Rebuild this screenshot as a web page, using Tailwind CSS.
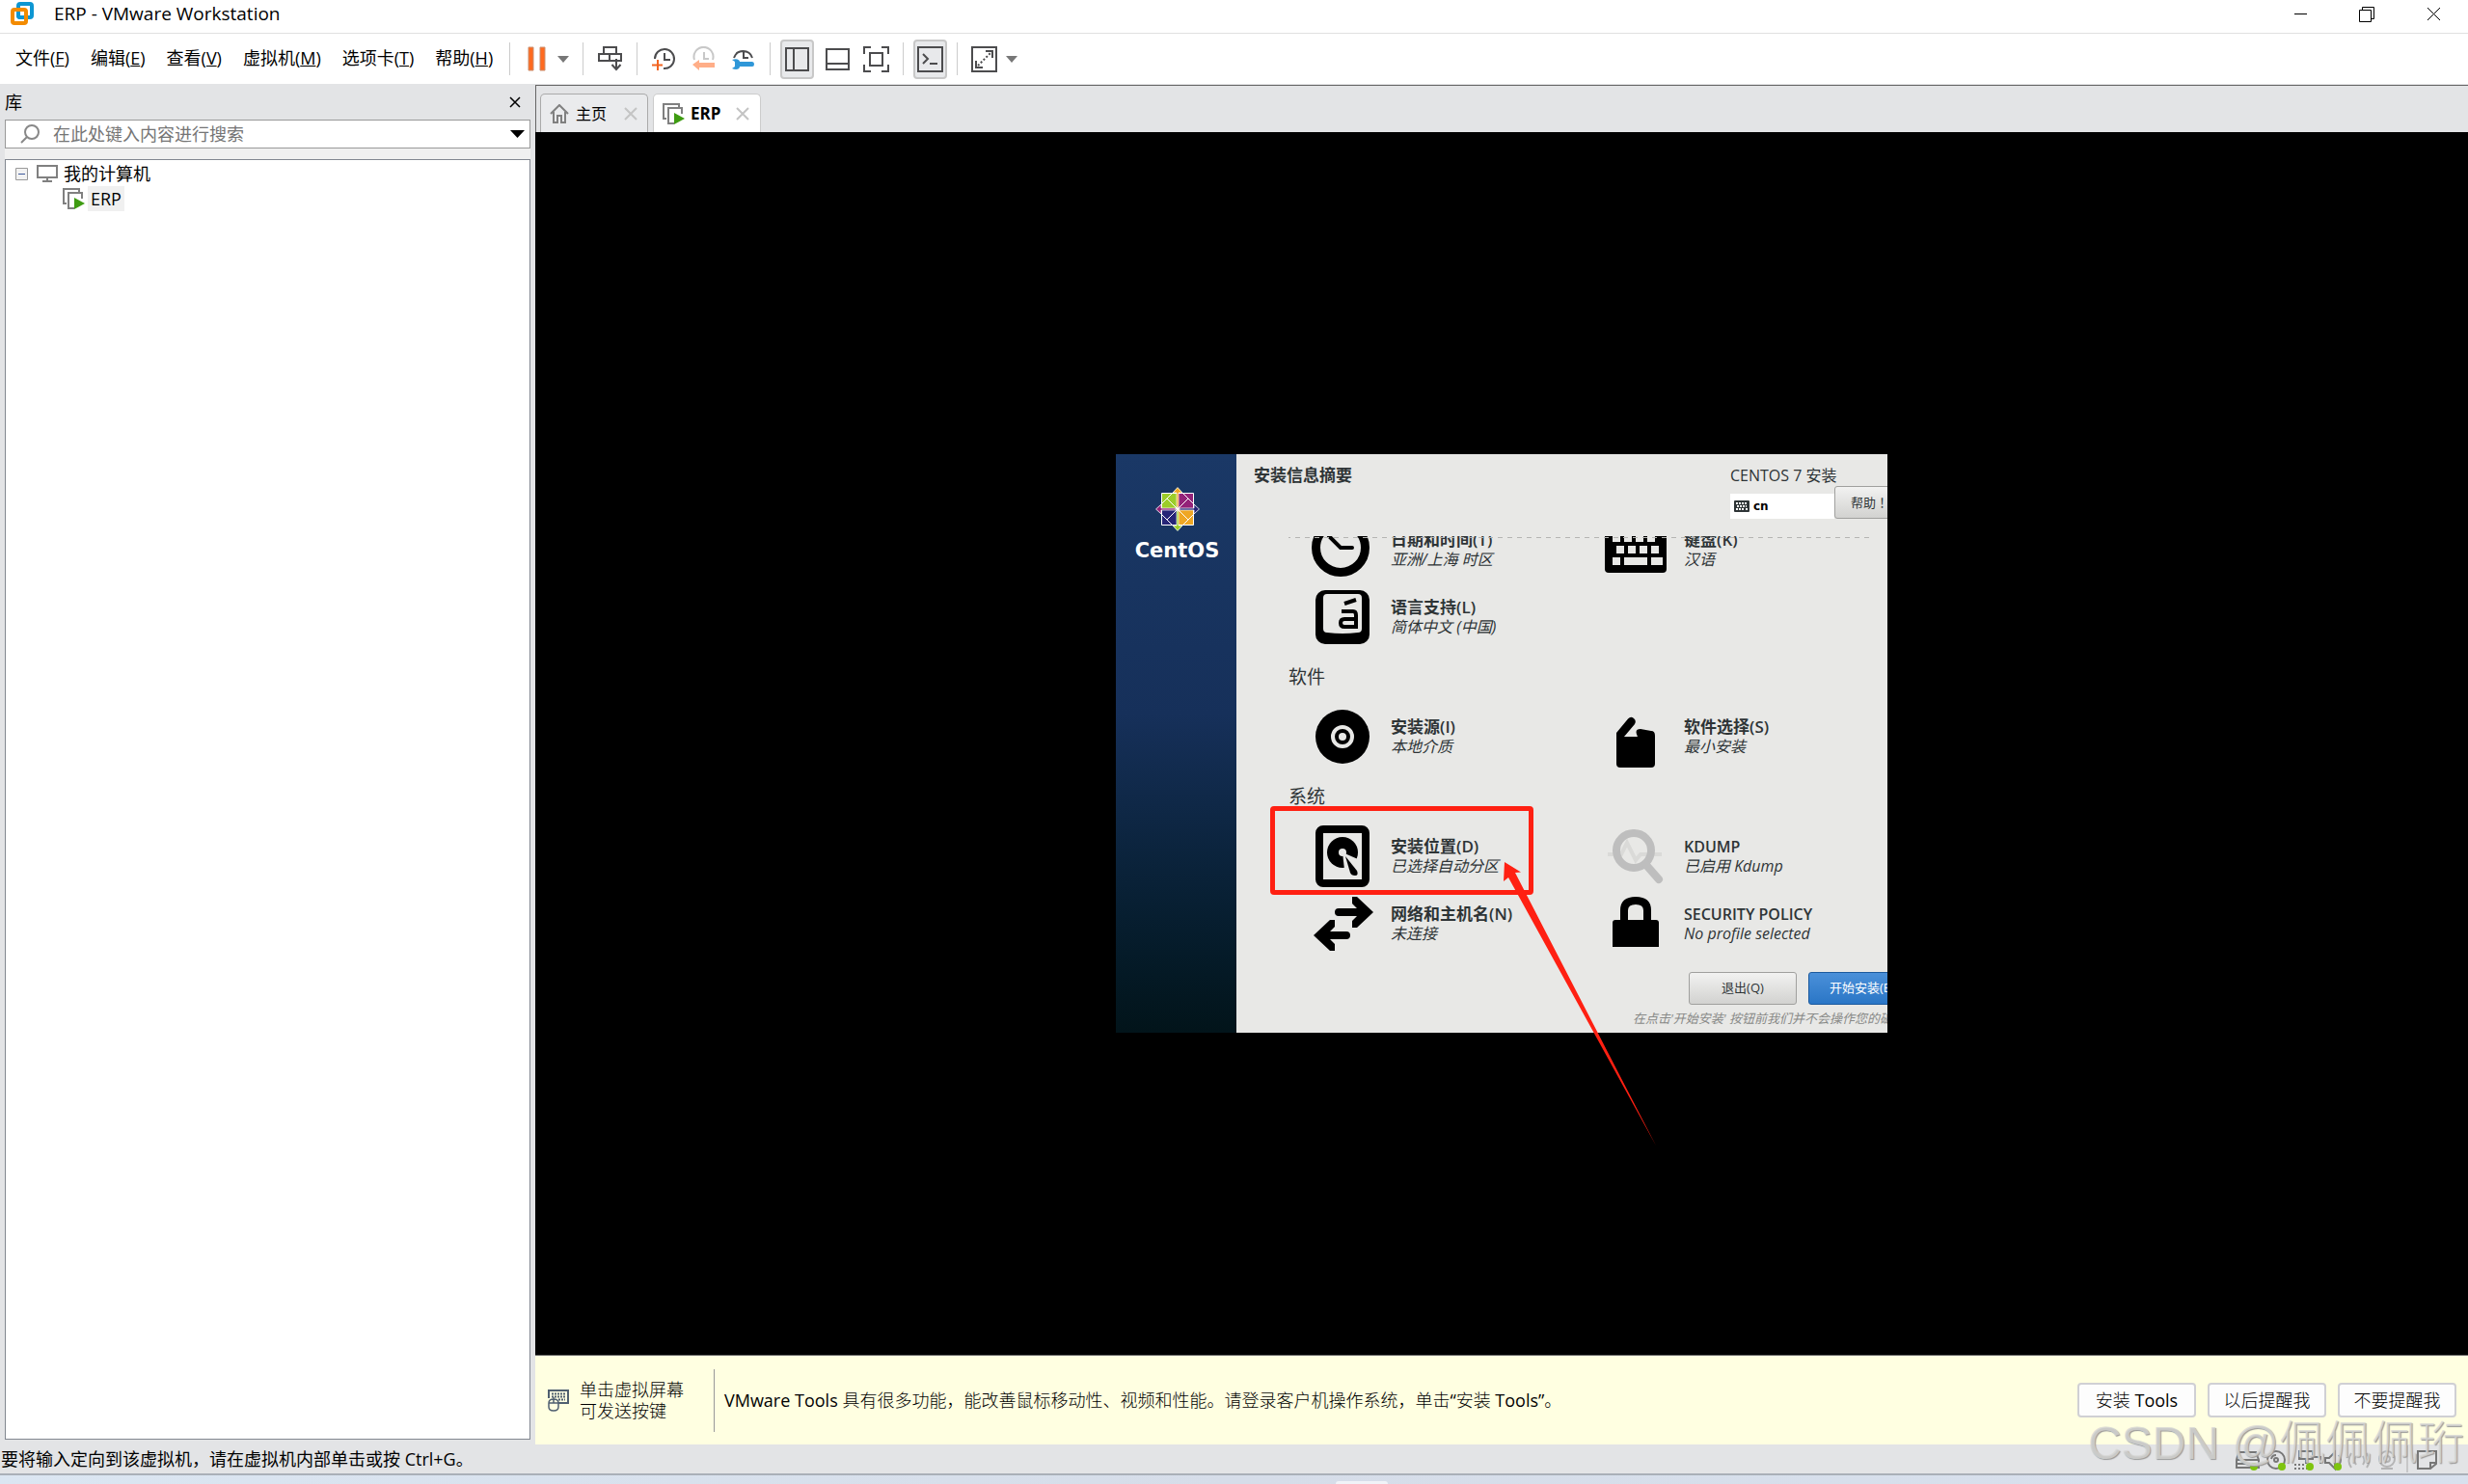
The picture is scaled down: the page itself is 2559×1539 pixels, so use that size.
<!DOCTYPE html>
<html lang="zh-CN">
<head>
    <meta charset="UTF-8">
    <meta name="viewport" content="width=device-width, initial-scale=1.0">
    <script src="https://cdn.jsdelivr.net/npm/@tailwindcss/browser@4"></script>
    <title>ERP - VMware Workstation</title>
</head>
<body class="font-['Open_Sans','Noto_Sans_CJK_SC',sans-serif] text-black">
<div class="h-screen flex flex-col overflow-hidden bg-[#e3e4e6] text-[18px] leading-[24px]">

    <!-- title bar -->
    <header class="h-[35px] shrink-0 flex items-center justify-between bg-white border-b border-[#e0e0e0] pb-[6px]">
        <div class="flex items-center pl-[11px]">
            <svg class="w-[25px] h-[25px]" viewBox="0 0 25 25" fill="none" stroke-width="4">
                <rect x="8" y="2" width="14" height="14" rx="2" stroke="#0d96d2"/>
                <rect x="2" y="8" width="14" height="14" rx="2" stroke="#f38b00"/>
                <path d="M8 11V14a2 2 0 0 0 2 2H13" stroke="#0d96d2"/>
            </svg>
            <h1 class="ml-[20px] text-[19px]">ERP - VMware Workstation</h1>
        </div>
        <div class="flex items-center pr-[27px] gap-[52px]">
            <button aria-label="最小化"><svg class="w-[17px] h-[17px]" viewBox="0 0 17 17"><path d="M2 8.500h13" stroke="#000"/></svg></button>
            <button aria-label="还原"><svg class="w-[17px] h-[17px]" viewBox="0 0 17 17" fill="none" stroke="#000"><path d="M.5 4.500h12v12h-12zM3.500 4.500v-3h12v12h-3"/></svg></button>
            <button aria-label="关闭"><svg class="w-[17px] h-[17px]" viewBox="0 0 17 17" stroke="#000"><path d="M2 2l13 13M15 2L2 15"/></svg></button>
        </div>
    </header>

    <!-- menu + toolbar -->
    <nav class="h-[52px] shrink-0 flex items-center bg-white pl-[16px]">
        <div class="flex gap-[22px] pb-[3px]">
            <button>文件(<u>F</u>)</button>
            <button>编辑(<u>E</u>)</button>
            <button>查看(<u>V</u>)</button>
            <button>虚拟机(<u>M</u>)</button>
            <button>选项卡(<u>T</u>)</button>
            <button>帮助(<u>H</u>)</button>
        </div>
        <div class="ml-[17px] flex items-center">
            <i class="w-px h-[34px] bg-[#ccc]"></i>
            <button class="ml-[18px]" aria-label="挂起"><svg class="w-[20px] h-[26px]" viewBox="0 0 20 26" fill="#ff6a1f" stroke="#c98f70"><path d="M1 1h5v24H1zM13 1h5v24h-5z"/></svg></button>
            <button class="ml-[11px]" aria-label="电源选项"><svg class="w-[12px] h-[7px]" viewBox="0 0 12 7"><path d="M0 0h12L6 7z" fill="#777"/></svg></button>
            <i class="ml-[14px] w-px h-[34px] bg-[#ccc]"></i>
            <button class="ml-[15px]" aria-label="发送 Ctrl+Alt+Del"><svg class="w-[26px] h-[26px]" viewBox="0 0 26 26" fill="none" stroke="#4c4c4e" stroke-width="2"><path d="M6 1h13v7H6zM1 8h11v7H1zM12 8h12v7H12zM19 13v10M14.500 19l4.500 5 4.500-5"/></svg></button>
            <i class="ml-[14px] w-px h-[34px] bg-[#ccc]"></i>
            <button class="ml-[15px]" aria-label="拍摄快照"><svg class="w-[25px] h-[26px]" viewBox="0 0 25 26" fill="none" stroke-width="2"><path d="M3 13A10 10 0 1 1 12 23M13 7v7h6" stroke="#4c4c4e"/><path d="M6 14v11M0 19.500h11" stroke="#f26522"/></svg></button>
            <button class="ml-[16px]" aria-label="恢复快照"><svg class="w-[25px] h-[26px]" viewBox="0 0 25 26" fill="none" stroke-width="2"><path d="M3 14A10 10 0 1 1 22 14M13 6v7h5" stroke="#c8c8c8"/><path d="M8 14v3h16v5H8v3l-7-6z" fill="#ffae88"/></svg></button>
            <button class="ml-[16px]" aria-label="管理快照"><svg class="w-[25px] h-[26px]" viewBox="0 0 25 26" fill="none" stroke-width="2"><path d="M3 12A10 10 0 0 1 22 12M13 5v7h5" stroke="#4c4c4e"/><path d="M1 14c5-2 8 0 8 2h13q2 0 2 2.500T22 21H9c0 3-4 4-8 2l3-2v-5z" fill="#2f97d8"/></svg></button>
            <i class="ml-[15px] w-px h-[34px] bg-[#ccc]"></i>
            <button class="ml-[10px] w-[35px] h-[41px] flex items-center justify-center rounded-[4px] border-2 border-[#c8c8c8] bg-[#e8e9eb]" aria-label="显示库"><svg class="w-[25px] h-[25px] shrink-0" viewBox="0 0 25 25" fill="none" stroke="#4c4c4e" stroke-width="2"><path d="M1 1h23v23H1zM9 1v23"/></svg></button>
            <button class="ml-[12px]" aria-label="显示缩略图栏"><svg class="w-[25px] h-[25px]" viewBox="0 0 25 25" fill="none" stroke="#4c4c4e" stroke-width="2"><path d="M1 2h23v21H1zM1 17h23"/></svg></button>
            <button class="ml-[14px]" aria-label="全屏"><svg class="w-[27px] h-[27px]" viewBox="0 0 27 27" fill="none" stroke="#4c4c4e" stroke-width="2"><path d="M7 7h13v13H7zM1 8V1h7M19 1h7v7M26 19v7h-7M8 26H1v-7"/></svg></button>
            <i class="ml-[14px] w-px h-[34px] bg-[#ccc]"></i>
            <button class="ml-[10px] w-[35px] h-[41px] flex items-center justify-center rounded-[4px] border-2 border-[#c8c8c8] bg-[#e8e9eb]" aria-label="控制台视图"><svg class="w-[27px] h-[27px] shrink-0" viewBox="0 0 27 27" fill="none" stroke="#4c4c4e" stroke-width="2"><path d="M1 1h25v25H1zM6 8l5 5-5 5M13 18h8"/></svg></button>
            <i class="ml-[10px] w-px h-[34px] bg-[#ccc]"></i>
            <button class="ml-[14px]" aria-label="自由拉伸"><svg class="w-[27px] h-[27px]" viewBox="0 0 27 27" fill="none" stroke="#4c4c4e" stroke-width="2"><path d="M1 1h25v25H1zM15 5h7v7M5 15v7h7"/><path d="M7 20L20 7" stroke-dasharray="2 2"/></svg></button>
            <button class="ml-[9px]" aria-label="拉伸选项"><svg class="w-[12px] h-[7px]" viewBox="0 0 12 7"><path d="M0 0h12L6 7z" fill="#777"/></svg></button>
        </div>
    </nav>

    <div class="flex-1 min-h-0 flex">
        <!-- library -->
        <aside class="w-[555px] shrink-0 flex flex-col pl-[5px] pr-[5px] pb-[5px]">
            <div class="h-[37px] flex items-center justify-between pr-[10px]">
                <h2>库</h2>
                <button aria-label="关闭库"><svg class="w-[12px] h-[12px]" viewBox="0 0 12 12" stroke="#000" stroke-width="1.500"><path d="M1 1l10 10M11 1L1 11"/></svg></button>
            </div>
            <div class="h-[30px] flex items-center border border-[#999] bg-white pl-[15px] pr-[5px]">
                <svg class="w-[20px] h-[20px]" viewBox="0 0 20 20" fill="none" stroke="#888" stroke-width="2"><circle cx="12" cy="8" r="7"/><path d="M7 13l-6 6"/></svg>
                <input class="flex-1 ml-[14px] outline-none placeholder:text-[#757575]" type="text" aria-label="搜索" placeholder="在此处键入内容进行搜索">
                <button aria-label="搜索选项"><svg class="w-[15px] h-[8px]" viewBox="0 0 15 8"><path d="M0 0h15L7.500 8z"/></svg></button>
            </div>
            <div class="h-[11px] bg-[#f0f0f0]"></div>
            <div class="flex-1 border border-[#828790] bg-white pt-px">
                <div class="h-[26px] flex items-center pl-[10px]">
                    <svg class="w-[13px] h-[13px]" viewBox="0 0 13 13"><path d="M.5.500h12v12H.5z" fill="#f2f2f2" stroke="#999"/><path d="M3 6.500h7" stroke="#3f5a9c"/></svg>
                    <svg class="w-[22px] h-[18px] ml-[9px]" viewBox="0 0 22 18" fill="none" stroke="#808080" stroke-width="2"><path d="M1 1h20v12H1zM11 13v3M6 17h10"/></svg>
                    <span class="ml-[6px]">我的计算机</span>
                </div>
                <div class="h-[26px] flex items-center pl-[59px]">
                    <svg class="w-[23px] h-[22px]" viewBox="0 0 23 22" fill="none" stroke="#808080" stroke-width="2"><path d="M17 4V1H1v15h3M20 11V5H6v16h6"/><path d="M12 10l11 6-11 6z" fill="#3f9c12" stroke="none"/></svg>
                    <span class="ml-[3px] px-[3px] leading-[26px] bg-[#f0f0f0]">ERP</span>
                </div>
            </div>
        </aside>

        <main class="flex-1 min-w-0 flex flex-col mt-px">
            <!-- tabs -->
            <div class="h-[49px] shrink-0 flex items-end border-t border-l border-[#666] pl-[4px] gap-[5px]">
                <div class="w-[112px] h-[40px] flex items-center rounded-t-[5px] border border-b-0 border-[#aaa] bg-[#eaebed] pl-[9px] text-[16px]">
                    <svg class="w-[20px] h-[20px]" viewBox="0 0 20 20" fill="none" stroke="#808080" stroke-width="2"><path d="M1 10l9-9 9 9M4 8v11h4v-7h4v7h4V8"/></svg>
                    <span class="ml-[7px]">主页</span>
                    <button class="ml-[18px]" aria-label="关闭主页"><svg class="w-[14px] h-[14px]" viewBox="0 0 14 14" stroke="#c4c4c4" stroke-width="2"><path d="M1 1l12 12M13 1L1 13"/></svg></button>
                </div>
                <div class="w-[112px] h-[40px] flex items-center rounded-t-[5px] border border-b-0 border-[#ccc] bg-white pl-[9px] text-[17px]">
                    <svg class="w-[23px] h-[22px]" viewBox="0 0 23 22" fill="none" stroke="#808080" stroke-width="2"><path d="M17 4V1H1v15h3M20 11V5H6v16h6"/><path d="M12 10l11 6-11 6z" fill="#3f9c12" stroke="none"/></svg>
                    <b class="ml-[6px]">ERP</b>
                    <button class="ml-[16px]" aria-label="关闭 ERP"><svg class="w-[14px] h-[14px]" viewBox="0 0 14 14" stroke="#c4c4c4" stroke-width="2"><path d="M1 1l12 12M13 1L1 13"/></svg></button>
                </div>
            </div>

            <!-- guest screen -->
            <div class="flex-1 min-h-0 flex items-center justify-center bg-black border-b border-[#666]">
                <div class="relative w-[800px] h-[600px] shrink-0 text-[#2e3436]">
                    <div class="w-full h-full flex overflow-hidden bg-[#e8e8e6]">
                        <div class="w-[125px] shrink-0 flex flex-col items-center pl-[2px] pt-[34px] bg-linear-to-b from-[#1a3866] via-[#16305a] via-45% to-[#02141a]">
                            <svg class="w-[46px] h-[46px]" viewBox="0 0 46 46" stroke="#fff" stroke-width="1">
                                <path d="M6.500 6.500H23V23H6.500z" fill="#9ccd2a"/>
                                <path d="M23 6.500h16.500V23H23z" fill="#932279"/>
                                <path d="M6.500 23H23v16.500H6.500z" fill="#262577"/>
                                <path d="M23 23h16.500v16.500H23z" fill="#efa724"/>
                                <path d="M23 23L12 12l11-11 11 11zM23 23l11-11 11 11-11 11zM23 23l11 11-11 11-11-11zM23 23L12 34 1 23l11-11z" fill="none"/>
                                <path d="M22 21V6h-4l5-5.500L28 6h-4v15z" fill="#efa724" stroke-width=".7"/>
                                <path d="M25 22h15v-4l5.500 5-5.500 5v-4H25z" fill="#262577" stroke-width=".7"/>
                                <path d="M24 25v15h4l-5 5.500L18 40h4V25z" fill="#9ccd2a" stroke-width=".7"/>
                                <path d="M21 24H6v4L.5 23 6 18v4h15z" fill="#932279" stroke-width=".7"/>
                            </svg>
                            <div class="mt-[8px] font-['DejaVu_Sans',sans-serif] font-bold text-[21px] leading-[24px] text-white">CentOS</div>
                        </div>

                        <div class="w-[715px] shrink-0 flex flex-col">
                            <div class="h-[85px] shrink-0 flex pl-[18px] text-[16px] leading-[20px]">
                                <h2 class="w-[494px] shrink-0 pt-[12px] font-bold text-[17px]">安装信息摘要</h2>
                                <div>
                                    <p class="pt-[12px]">CENTOS 7 安装</p>
                                    <div class="flex items-end">
                                        <div class="w-[108px] h-[26px] mt-[9px] pl-[4px] flex items-center bg-white font-['DejaVu_Sans',sans-serif] font-bold text-[12px] text-black">
                                            <svg class="w-[16px] h-[12px] mr-[4px]" viewBox="0 0 16 12"><rect width="16" height="12" rx="1" fill="#2e3436"/><path d="M2 3h12M3 6h10M2 9h2M5 9h6M12 9h2" stroke="#fff" stroke-width="2" stroke-dasharray="2 1"/></svg>cn
                                        </div>
                                        <button class="w-[74px] h-[34px] -mt-[8px] shrink-0 pl-[16px] text-left rounded-[3px] border border-[#a0a09e] bg-linear-to-b from-[#f2f2f1] to-[#d2d2d0] font-['Noto_Sans_CJK_TC',sans-serif] text-[13px]" lang="zh-TW">帮助！</button>
                                    </div>
                                </div>
                            </div>

                            <!-- hub list, scrolled to its end -->
                            <div class="relative h-[437px] shrink-0 flex flex-col justify-end overflow-hidden pl-[54px]">
                                <div id="hub"></div>
                                <svg class="absolute left-[54px] top-0 w-[602px] h-[3px]"><path d="M0 1.500h602" stroke="#b4b4b2" stroke-dasharray="5 5" stroke-dashoffset="3"/></svg>
                            </div>

                            <div class="mt-[15px] flex gap-[12px] pl-[469px] text-[13px]">
                                <button class="w-[112px] h-[34px] shrink-0 rounded-[3px] border border-[#a0a09e] bg-linear-to-b from-[#f2f2f1] to-[#d2d2d0] pb-[2px]">退出(Q)</button>
                                <button class="w-[112px] h-[34px] shrink-0 rounded-[3px] border border-[#1c5a9e] bg-linear-to-b from-[#4a90d9] to-[#2a76c6] pb-[2px] text-white">开始安装(B)</button>
                            </div>
                            <p class="mt-[5px] pl-[411px] text-[13px] leading-[18px] italic text-[#888a88] whitespace-nowrap">在点击'开始安装' 按钮前我们并不会操作您的磁盘。</p>
                        </div>
                    </div>

                    <!-- marks on the install destination -->
                    <div class="absolute left-[160px] top-[365px] w-[273px] h-[92px] border-[5px] border-[#ff2012] rounded-[4px]"></div>
                    <svg class="absolute left-[383px] top-[399px] w-[200px] h-[330px]" viewBox="0 0 200 330"><path d="M20 24L37 34.500 31 35 177 318 24 40 19 44z" fill="#ff2012"/></svg>
                </div>
            </div>

            <!-- hint bar -->
            <div class="h-[92px] shrink-0 flex items-center bg-[#ffffe1] pl-[13px] pr-[12px]">
                <svg class="w-[22px] h-[23px]" viewBox="0 0 22 23" fill="none" stroke="#4f5f70" stroke-width="2"><path d="M1 9V1h20v13H11"/><path d="M4 4.500h14M4 7.500h14M11 10.500h7" stroke-dasharray="2 1"/><path d="M1 14q0-4 5-4t5 4v4q0 4-5 4t-5-4zM1 14h10M6 8v6" stroke-width="1.500"/></svg>
                <p class="ml-[11px] leading-[22px] font-light">单击虚拟屏幕<br>可发送按键</p>
                <i class="ml-[31px] w-px h-[65px] bg-[#999]"></i>
                <p class="ml-[10px] flex-1 font-light whitespace-nowrap"><span class="font-normal">VMware Tools</span> 具有很多功能，能改善鼠标移动性、视频和性能。请登录客户机操作系统，单击<span class="font-normal">“</span>安装 <span class="font-normal">Tools”</span>。</p>
                <div class="flex gap-[12px] font-light">
                    <button class="w-[123px] h-[36px] rounded-[4px] border-2 border-[#d0d0d4] bg-[#fdfdfd]">安装 <span class="font-normal">Tools</span></button>
                    <button class="w-[123px] h-[36px] rounded-[4px] border-2 border-[#d0d0d4] bg-[#fdfdfd]">以后提醒我</button>
                    <button class="w-[123px] h-[36px] rounded-[4px] border-2 border-[#d0d0d4] bg-[#fdfdfd]">不要提醒我</button>
                </div>
            </div>
        </main>
    </div>

    <!-- status bar -->
    <footer class="relative h-[30px] shrink-0 flex items-center justify-between pl-px pr-[32px]">
        <p>要将输入定向到该虚拟机，请在虚拟机内部单击或按 Ctrl+G。</p>
        <svg class="w-[210px] h-[28px]" viewBox="0 0 210 28" fill="none" stroke="#777" stroke-width="2">
            <path d="M4 7h18l3 8v8H2v-8zM2 15h22M2 19h14"/>
            <circle cx="43" cy="15" r="9"/><circle cx="43" cy="15" r="2"/><path d="M38 14q1-4 5-4"/>
            <path d="M67 6h14v8H67zM74 14v5M82 12h7v7"/><path d="M62 24h14M62 20h10" stroke-dasharray="2 2"/>
            <path d="M94 13h4l6-6v17l-6-6h-4zM108 10q4 5 0 10"/>
            <path d="M121 8q-5 8 0 15M126 11q-3 5 0 9M137 8q5 8 0 15M133 11q3 5 0 9" stroke="#b4b4b4"/>
            <circle cx="158" cy="14" r="8" stroke="#b4b4b4"/><circle cx="158" cy="14" r="3" stroke="#b4b4b4"/><path d="M152 24h12" stroke="#b4b4b4"/>
            <path d="M179 0v28" stroke="#aaa" stroke-width="1"/>
            <path d="M190 6h19v13l-6 5h-13zM209 18h-6v6"/>
            <g fill="#7ec40f" stroke="none"><circle cx="20" cy="22" r="4"/><circle cx="49" cy="22" r="4"/><circle cx="78" cy="22" r="4"/><circle cx="107" cy="22" r="4"/></g>
        </svg>
        <div class="absolute right-[4px] bottom-px text-[48px] leading-[60px] font-['Liberation_Sans','Noto_Sans_CJK_SC',sans-serif] font-light text-[#d8d8d6]/80 [text-shadow:1px_1px_1px_#999] whitespace-nowrap pointer-events-none">CSDN @佩佩佩珩</div>
    </footer>
    <div class="h-[11px] shrink-0 flex justify-center items-end border-t-2 border-[#aab0b8] bg-linear-to-r from-[#dbe6f2] via-[#d6dde9] to-[#d8e1ee]">
        <i class="w-[54px] h-[3px] ml-[264px] rounded-t-[3px] bg-[#f0f3f8]"></i>
    </div>
</div>
</body>
<script>
    const icons = {
        clock: '<circle cx="30" cy="30" r="25.500" fill="none" stroke="#000" stroke-width="9"/><path d="M18 18l12 12h12" fill="none" stroke="#000" stroke-width="4" stroke-linecap="round"/>',
        keyboard: '<rect y="4" width="64" height="52" rx="4"/><path d="M8 16h8v8H8zM20 16h8v8h-8zM32 16h8v8h-8zM44 16h8v8h-8zM12 28h8v8h-8zM24 28h8v8h-8zM36 28h8v8h-8zM48 28h8v8h-8zM8 40h8v8H8zM20 40h24v8H20zM48 40h12v8H48z" fill="#e8e8e6"/>',
        language: '<rect x="4" y="4" width="56" height="56" rx="10"/><path d="M16 8h32q4 0 4 4v32q0 4-4 4-16 2-32 0-4 0-4-4V12q0-4 4-4z" fill="#e8e8e6"/><path d="M34 18l12-4M31 26h12q3 0 3 4v12H34q-4 0-4-4t4-4h12" fill="none" stroke="#000" stroke-width="4"/>',
        disc: '<circle cx="32" cy="32" r="28"/><circle cx="32" cy="32" r="10" fill="none" stroke="#e8e8e6" stroke-width="4"/><circle cx="32" cy="32" r="4" fill="#e8e8e6"/>',
        box: '<path d="M12 28L24 13.500q3-3 6-.5t1 6L20 32h14q-4-8 3-8l11 2q4 0 4 5v29q0 4-4 4H16q-4 0-4-4z"/>',
        disk: '<rect x="8" y="4" width="48" height="56" rx="4" fill="none" stroke="#000" stroke-width="8"/><circle cx="32" cy="28" r="16"/><path d="M32 28l16 7-1 11H34z" fill="#e8e8e6"/><circle cx="32" cy="28" r="4" fill="#e8e8e6"/><path d="M35 32l12 15q2 5-2 5t-5-3z"/>',
        arrows: '<path d="M42 4h5l17 16-17 16h-5v-7l5-5H28q-4 0-4-4t4-4h19l-5-5zM24 28h-5L2 44l17 16h5v-7l-5-5h17q4 0 4-4t-4-4H19l5-5z"/>',
        kdump: '<path d="M3 30h14l6-12 9 18 5-6h22" fill="none" stroke="#dadad8" stroke-width="4"/><circle cx="30" cy="26" r="18" fill="none" stroke="#bebebe" stroke-width="8"/><path d="M42 40l14 16" stroke="#bebebe" stroke-width="8" stroke-linecap="round"/>',
        lock: '<path d="M20 30V18q0-10 12-10t12 10v12" fill="none" stroke="#000" stroke-width="8"/><path d="M8 31q0-3 3-3h42q3 0 3 3v25H8z"/>'
    };

    const hub = [
        { heading: "", items: [
            ["clock", "日期和时间(T)", "亚洲/上海 时区"],
            ["keyboard", "键盘(K)", "汉语"],
            ["language", "语言支持(L)", "简体中文 (中国)"]
        ]},
        { heading: "软件", items: [
            ["disc", "安装源(I)", "本地介质"],
            ["box", "软件选择(S)", "最小安装"]
        ]},
        { heading: "系统", items: [
            ["disk", "安装位置(D)", "已选择自动分区"],
            ["kdump", "KDUMP", "已启用 Kdump"],
            ["arrows", "网络和主机名(N)", "未连接"],
            ["lock", "SECURITY POLICY", "No profile selected"]
        ]}
    ];

    let html = "";
    hub.forEach(function(group) {
        if (group.heading) {
            html += `<h3 class="h-[54px] leading-[54px] text-[19px]">${group.heading}</h3>`;
        }
        html += `<div class="grid grid-cols-[304px_304px] pl-[24px]">`;
        group.items.forEach(function(item) {
            // latin-only titles run a size smaller
            const size = /[一-龥]/.test(item[1]) ? "text-[17px]" : "text-[16px]";
            html += `
                <button class="h-[70px] flex items-center gap-[18px] text-left leading-[20px]">
                    <svg class="w-[64px] h-[64px] shrink-0" viewBox="0 0 64 64">${icons[item[0]]}</svg>
                    <span class="whitespace-nowrap">
                        <span class="block ${size} font-semibold">${item[1]}</span>
                        <span class="block text-[16px] italic">${item[2]}</span>
                    </span>
                </button>
            `;
        });
        html += `</div>`;
    });
    document.getElementById("hub").innerHTML = html;
</script>
</html>
